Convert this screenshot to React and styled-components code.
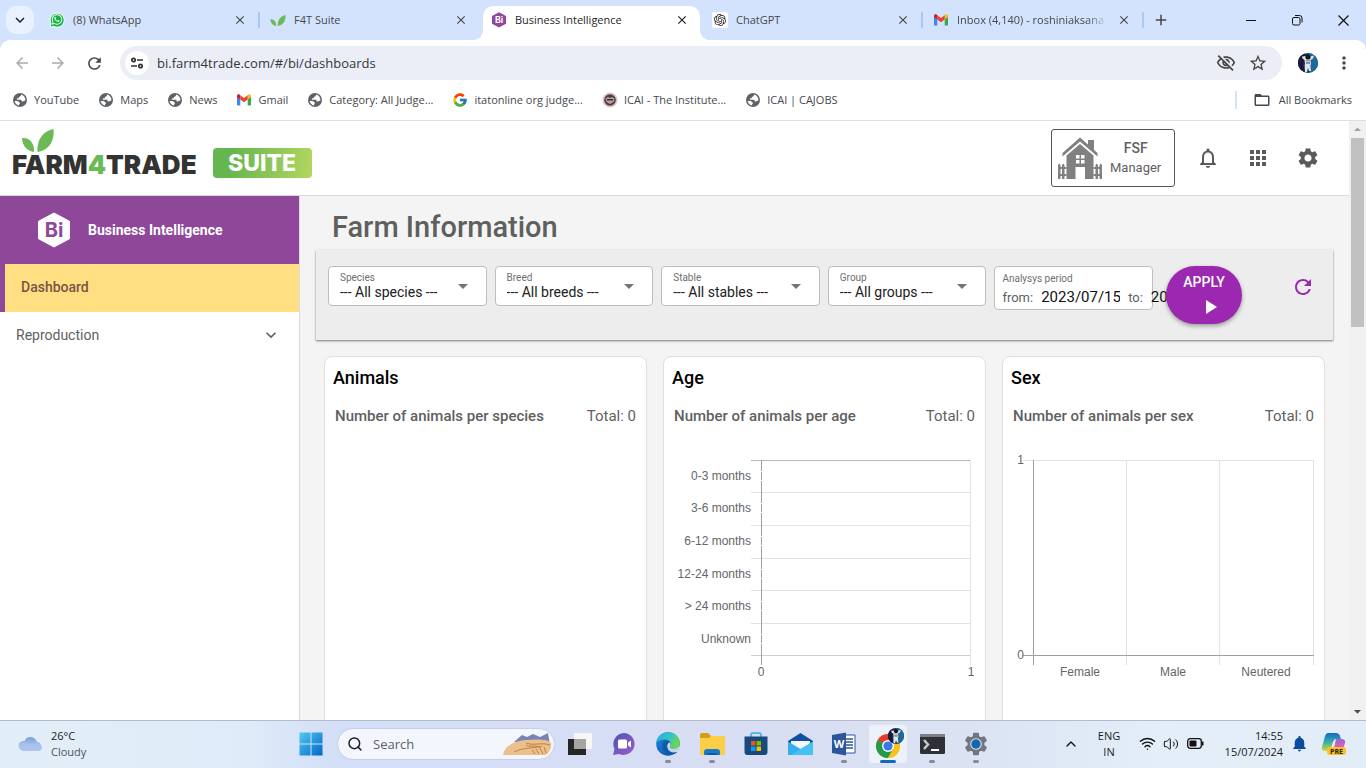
import React from "react";
import styled, { createGlobalStyle, css } from "styled-components";
import {
  MdNotificationsNone, MdApps, MdSettings, MdRefresh, MdPlayArrow, MdArrowDropDown,
  MdExpandMore, MdStarBorder, MdMoreVert, MdOutlineVisibilityOff, MdFolderOpen,
  MdArrowBack, MdArrowForward, MdClose, MdAdd, MdArrowDropUp, MdNotifications,
} from "react-icons/md";
import { SiOpenai } from "react-icons/si";
import { FaWhatsapp } from "react-icons/fa";
import { Wifi, Volume2, ChevronUp, Search } from "lucide-react";

const purple = "#8e4799";
const uiFont = '"Open Sans", "Noto Sans", sans-serif';
const appFont = 'Roboto, "Liberation Sans", sans-serif';

const GlobalStyle = createGlobalStyle`
  *, *::before, *::after { box-sizing: border-box; }
  body { margin: 0; background: #fff; }
  button, input, select { font: inherit; color: inherit; margin: 0; padding: 0; border: 0; background: none; }
  a { color: inherit; text-decoration: none; }
  h1, h2, h3, p { margin: 0; font-weight: inherit; font-size: inherit; }
  svg { display: block; flex: none; }
`;

const Screen = styled.div`
  display: flex;
  flex-direction: column;
  height: 100vh;
  overflow: hidden;
  font-family: ${uiFont};
`;

/* ---------- Browser window ---------- */
const TabStrip = styled.div`
  display: flex;
  align-items: center;
  height: 40px;
  flex: none;
  padding-left: 6px;
  background: #d3e3fd;
  font-size: 11px;
  color: #3c4043;
`;
const TabSearch = styled.button`
  display: grid;
  place-items: center;
  width: 28px;
  height: 28px;
  margin-right: 5px;
  border-radius: 10px;
  background: #e9f0fe;
  color: #1f1f1f;
`;
const Tab = styled.div`
  position: relative;
  display: flex;
  align-items: center;
  gap: 8px;
  flex: 0 1 221px;
  min-width: 0;
  height: 40px;
  padding: 0 12px 0 10px;
  color: ${(p) => (p.$active ? "#1f1f1f" : "#45494d")};
  z-index: ${(p) => (p.$active ? 1 : 0)};
  &::after {
    content: "";
    position: absolute;
    ${(p) =>
      p.$active
        ? css`
            z-index: -1;
            inset: 30px -8px 0 -8px;
            background:
              radial-gradient(circle at 0 0, transparent 10px, #fff 10px) left / 10px 10px no-repeat,
              radial-gradient(circle at 100% 0, transparent 10px, #fff 10px) right / 10px 10px no-repeat;
          `
        : css`
            right: 0;
            top: 12px;
            width: 2px;
            height: 16px;
            background: ${p.$divider ? "#a8c7fa" : "transparent"};
          `}
  }
  ${(p) =>
    p.$active &&
    css`
      &::before {
        content: "";
        position: absolute;
        z-index: -1;
        inset: 6px 2px 0 2px;
        border-radius: 10px 10px 0 0;
        background: #fff;
      }
    `}
`;
const TabTitle = styled.button`
  flex: 1;
  min-width: 0;
  overflow: hidden;
  white-space: nowrap;
  text-align: left;
  line-height: 20px;
  ${(p) => p.$fade && css`mask-image: linear-gradient(90deg, #000 86%, transparent);`}
`;
const IconButton = styled.button`
  display: grid;
  place-items: center;
  flex: none;
  width: ${(p) => p.$w || 36}px;
  height: ${(p) => p.$h || 32}px;
  color: ${(p) => p.$color || "#474747"};
`;
const WindowControls = styled.div`
  display: flex;
  margin-left: auto;
`;
const Toolbar = styled.div`
  display: flex;
  align-items: center;
  height: 46px;
  flex: none;
  padding: 0 4px;
  background: #fff;
  border-radius: 10px 10px 0 0;
`;
const ToolbarWrap = styled.div`
  flex: none;
  background: #d3e3fd;
`;
const Omnibox = styled.div`
  display: flex;
  align-items: center;
  flex: 1;
  height: 34px;
  margin: 0 8px;
  padding: 0 8px 0 5px;
  border-radius: 17px;
  background: #ebeef7;
`;
const SiteInfo = styled.button`
  display: grid;
  place-items: center;
  width: 24px;
  height: 24px;
  margin-right: 8px;
  border-radius: 50%;
  background: #fff;
`;
const Address = styled.input`
  flex: 1;
  min-width: 0;
  font-size: 13px;
  line-height: 20px;
  color: #33373b;
  outline: none;
`;
const Bookmarks = styled.nav`
  display: flex;
  align-items: center;
  gap: 19px;
  height: 35px;
  flex: none;
  padding: 0 14px 6px 12px;
  border-bottom: 1px solid #dcdfe3;
  font-size: 11px;
  line-height: 16px;
  color: #45494d;
`;
const Bookmark = styled.a`
  display: flex;
  align-items: center;
  gap: 6px;
  white-space: nowrap;
`;
const AllBookmarks = styled.button`
  display: flex;
  align-items: center;
  gap: 8px;
  margin-left: auto;
  padding-left: 16px;
  border-left: 2px solid #d3e3fd;
  white-space: nowrap;
`;

/* ---------- Web application ---------- */
const Viewport = styled.div`
  display: flex;
  flex: 1;
  min-height: 0;
  font-family: ${appFont};
  color: #5f5f5f;
`;
const Page = styled.div`
  display: flex;
  flex-direction: column;
  flex: 1;
  min-width: 0;
  overflow: hidden;
`;
const ScrollTrack = styled.div`
  display: flex;
  flex-direction: column;
  align-items: center;
  width: 17px;
  background: #f1f1f1;
`;
const ScrollThumb = styled.div`
  width: 13px;
  height: 189px;
  margin-bottom: auto;
  background: #c1c1c1;
`;
const Header = styled.header`
  display: flex;
  align-items: flex-start;
  flex: none;
  height: 75px;
  padding: 8px 16px 0 12px;
  border-bottom: 1px solid #dcdcdc;
  background: #fff;
`;
const Brand = styled.a`
  display: flex;
  align-items: flex-end;
  gap: 16px;
`;
const Wordmark = styled.span`
  display: block;
  font: 900 26px/26px Inter, sans-serif;
  color: #333432;
  em { font-style: normal; color: #6cba55; }
`;
const LeafMark = styled.svg`
  margin-left: 10px;
`;
const SuiteBadge = styled.span`
  width: 99px;
  border-radius: 4px;
  background: linear-gradient(100deg, #66b64f 20%, #b4d660);
  font: 800 23px/30px Inter, sans-serif;
  color: #fff;
  text-align: center;
`;
const HeaderActions = styled.div`
  display: flex;
  align-items: center;
  margin-left: auto;
`;
const FarmButton = styled.button`
  display: flex;
  align-items: center;
  gap: 8px;
  width: 124px;
  height: 58px;
  margin-right: 8px;
  padding: 0 6px;
  border: 1px solid #555;
  border-radius: 3px;
  font-size: 13px;
  line-height: 19px;
  color: #5f5f5f;
  strong { display: block; font-weight: 500; font-size: 14px; }
`;
const Body = styled.div`
  display: flex;
  flex: 1;
  min-height: 0;
`;
const Sidebar = styled.nav`
  width: 300px;
  flex: none;
  border-right: 1px solid #dcdcdc;
  background: #fff;
  font-size: 14px;
`;
const ModuleTitle = styled.div`
  display: flex;
  align-items: center;
  gap: 18px;
  height: 68px;
  padding-left: 38px;
  background: ${purple};
  color: #fff;
  font-weight: 700;
`;
const MenuItem = styled.a`
  display: flex;
  align-items: center;
  justify-content: space-between;
  height: 48px;
  padding: 0 18px 2px 16px;
  ${(p) =>
    p.$active &&
    css`
      border-left: 5px solid ${purple};
      background: #ffdf82;
      color: #795548;
      font-weight: 500;
    `}
`;
const Main = styled.main`
  flex: 1;
  min-width: 0;
  padding: 0 16px;
  background: #f4f4f4;
`;
const PageTitle = styled.h1`
  padding: 14px 16px 6px;
  font-weight: 500;
  font-size: 29px;
  line-height: 34px;
`;
const FilterPanel = styled.form`
  display: grid;
  grid-template-columns: repeat(5, minmax(0, 1fr)) 160px;
  align-items: start;
  gap: 8px;
  min-height: 90px;
  padding: 16px 12px;
  background: #ededed;
  box-shadow: 0 1px 2px rgba(0, 0, 0, 0.5);
`;
const Field = styled.div`
  position: relative;
  min-width: 0;
  height: 40px;
  padding: 4px 11px;
  border: 1px solid #bdbdbd;
  border-radius: 4px;
  background: #fff;
`;
const FieldLabel = styled.label`
  display: block;
  font-size: 10px;
  line-height: 13px;
  color: #6f6f6f;
`;
const Select = styled.select`
  display: block;
  width: 100%;
  appearance: none;
  outline: none;
  font-size: 14px;
  line-height: 16px;
  color: #212121;
`;
const FieldArrow = styled(MdArrowDropDown)`
  position: absolute;
  right: 11px;
  top: 7px;
  color: #757575;
  pointer-events: none;
`;
const PeriodField = styled(Field)`
  height: 44px;
  padding: 5px 7px;
`;
const PeriodRow = styled.div`
  display: flex;
  align-items: center;
  gap: 8px;
  height: 24px;
  font-size: 13px;
`;
const DateInput = styled.input`
  flex: none;
  width: 79px;
  font-size: 15px;
  line-height: 16px;
  color: #111;
`;
const FilterActions = styled.div`
  position: relative;
  display: flex;
  justify-content: space-between;
  align-items: flex-start;
  padding-left: 5px;
`;
const ApplyButton = styled.button`
  display: flex;
  flex-direction: column;
  align-items: center;
  width: 76px;
  height: 58px;
  padding-top: 5px;
  border-radius: 29px;
  background: #9c27b0;
  box-shadow: 0 2px 4px rgba(0, 0, 0, 0.35);
  color: #fff;
  font-weight: 500;
  font-size: 14px;
  line-height: 22px;
  svg { margin: 2px 0 0 12px; }
`;
const Cards = styled.div`
  display: grid;
  grid-template-columns: repeat(3, minmax(0, 1fr));
  gap: 16px;
  padding: 16px 8px;
`;
const Card = styled.section`
  min-height: 400px;
  padding: 8px;
  border: 1px solid #e0e0e0;
  border-radius: 8px;
  background: #fff;
`;
const CardTitle = styled.h2`
  font-weight: 500;
  font-size: 18px;
  line-height: 26px;
  color: #000;
`;
const CardSummary = styled.div`
  display: flex;
  justify-content: space-between;
  padding: 16px 2px 0;
  font-size: 15px;
  line-height: 18px;
  h3 { font-weight: 500; }
`;
const Chart = styled.svg`
  width: 100%;
  margin-top: 16px;
  font: 12px "Liberation Sans", sans-serif;
  fill: #666;
`;

/* ---------- Taskbar ---------- */
const Taskbar = styled.footer`
  display: flex;
  align-items: center;
  flex: none;
  height: 48px;
  padding-bottom: 2px;
  border-top: 1px solid #b4bccb;
  background: linear-gradient(90deg, #e2eef7 0%, #dfebf8 18%, #d3def8 25%, #d8def3 55%, #dbe3f3 70%, #e3eef8 85%, #e2edf8 100%);
  font-size: 11px;
  line-height: 16px;
  color: #1b1b1b;
`;
const Weather = styled.button`
  display: flex;
  align-items: center;
  gap: 8px;
  width: 289px;
  padding-left: 18px;
  text-align: left;
  span { display: block; color: #4d535c; }
`;
const TaskButton = styled.button`
  position: relative;
  display: grid;
  place-items: center;
  width: ${(p) => (p.$active ? 38 : 44)}px;
  height: 38px;
  margin: ${(p) => (p.$active ? "0 3px" : "0")};
  border-radius: 4px;
  background: ${(p) => (p.$active ? "#edf1fb" : "none")};
  &::after {
    content: "";
    position: absolute;
    bottom: 0;
    width: ${(p) => (p.$active ? 16 : 6)}px;
    height: 3px;
    border-radius: 2px;
    background: ${(p) => (p.$active ? "#0f6cbd" : p.$running ? "#858b98" : "transparent")};
  }
`;
const SearchBox = styled.label`
  display: flex;
  align-items: center;
  gap: 10px;
  width: 218px;
  height: 32px;
  margin: 0 3px 0 4px;
  padding: 0 2px 0 9px;
  border: 1px solid #c6d0e4;
  border-radius: 16px;
  background: #f3f7fd;
  font-size: 13px;
  input { flex: 1; min-width: 0; outline: none; }
  input::placeholder { color: #5a5f66; opacity: 1; }
`;
const Tray = styled.div`
  display: flex;
  align-items: center;
  margin-left: auto;
  padding-right: 13px;
`;
const TrayText = styled.button`
  width: ${(p) => p.$w}px;
  text-align: ${(p) => p.$align || "center"};
  span { display: block; }
`;

/* ---------- Drawings ---------- */
const Gmail = () => (
  <svg width="16" height="16" viewBox="0 0 16 16">
    <path d="M1 4v8.500c0 .6.4 1 1 1h2.300V7z" fill="#4285f4" />
    <path d="M15 4v8.500c0 .6-.4 1-1 1h-2.300V7z" fill="#34a853" />
    <path d="M11.700 3.500V7.500L15 5V4c0-1.600-1.700-2.200-2.800-1.300z" fill="#fbbc04" />
    <path d="M1 4v1l3.300 2.500v-4l-.5-.8C2.700 1.800 1 2.400 1 4z" fill="#c5221f" />
    <path d="M4.300 3.200 8 6l3.700-2.800v4.300L8 10.300 4.300 7.500z" fill="#ea4335" />
  </svg>
);
const Google = () => (
  <svg width="16" height="16" viewBox="0 0 48 48">
    <path fill="#ffc107" d="M43.600 20H24v8h11.300C33.700 32.700 29.200 36 24 36a12 12 0 1 1 8-21l5.600-5.600A20 20 0 1 0 43.600 20z" />
    <path fill="#ff3d00" d="m6.300 14.700 6.600 4.800A12 12 0 0 1 32 15l5.600-5.600A20 20 0 0 0 6.300 14.700z" />
    <path fill="#4caf50" d="M24 44c5.200 0 9.900-2 13.400-5.200l-6.200-5.200A12 12 0 0 1 12.700 28l-6.500 5A20 20 0 0 0 24 44z" />
    <path fill="#1976d2" d="M43.600 20H24v8h11.300a12 12 0 0 1-4.100 5.600l6.200 5.200C37 39.200 44 34 44 24c0-1.300-.1-2.700-.4-4z" />
  </svg>
);
const Globe = () => (
  <svg width="16" height="16" viewBox="0 0 16 16">
    <circle cx="8" cy="8" r="7" fill="#5f6368" />
    <path d="M9 2.500c.1 1.400-.5 1.900-1.500 2.200-.9.200-.9 1.100-.4 1.600H5.600c-1 0-1.100 1.400-.3 1.400h3.200c.9 0 1.300.7 1 1.500l1.200.2c.8.100 1.200-.7 2.700-.8A5.600 5.600 0 0 0 9 2.500z" fill="#fff" />
    <path d="M2.600 9h2.800c1.200 0 1.300 1.500 2.400 1.600v1.200c-.9.200-.8 1-.6 1.600A5.600 5.600 0 0 1 2.600 9z" fill="#fff" />
  </svg>
);
const Leaves = ({ as: As = "svg", w, h }) => (
  <As width={w} height={h} viewBox="0 0 32 23" aria-hidden="true">
    <path d="M0 9c7-.5 12.500 4 12 14C5.500 22 .5 17.500 0 9z" fill="#6cba55" />
    <path d="M31.500 0C21 2 14.500 11 15.500 23 25.500 22 33 13.500 31.500 0z" fill="#6cba55" />
  </As>
);
const BiHex = ({ size, bg, fg }) => (
  <svg width={size} height={(size * 9) / 8} viewBox="0 0 32 36">
    <path d="M16 0.500 31 8.500q1 .5 1 1.500v16q0 1-1 1.500L16 35.500 1 27.500q-1-.5-1-1.500V10q0-1 1-1.500z" fill={bg} />
    <text x="16" y="25" textAnchor="middle" fontFamily="Inter, sans-serif" fontWeight="700" fontSize="20" fill={fg}>Bi</text>
  </svg>
);
const WhatsApp = () => (
  <svg width="16" height="16" viewBox="0 0 16 16">
    <path d="M1 15.300 2 11.500A7 7 0 1 1 4.800 14.300z" fill="#12b53f" stroke="#fff" strokeWidth="1" />
    <FaWhatsapp x="2" y="1.500" size="12" color="#fff" />
  </svg>
);
const ChatGPT = () => (
  <svg width="16" height="16" viewBox="0 0 16 16">
    <rect width="16" height="16" rx="2" fill="#fff" />
    <SiOpenai x="2" y="2" size="12" color="#222" />
  </svg>
);
const Emblem = () => (
  <svg width="16" height="16" viewBox="0 0 16 16">
    <circle cx="8" cy="8" r="7.500" fill="#e3c3bd" />
    <circle cx="8" cy="8" r="5.800" fill="#463b62" />
    <path d="M3.500 6.500 6 5l2 1 2-1 2.500 1.500-1 3.500L8 12l-3.500-2z" fill="#c0a579" />
    <path d="M5 7h6v1.500H5z" fill="#2c2d50" />
  </svg>
);
const SiteSettings = () => (
  <svg width="14" height="14" viewBox="0 0 14 14" fill="none" stroke="#303134" strokeWidth="1.700">
    <circle cx="3.500" cy="4" r="1.700" /><path d="M7 4h6M1 10h6" /><circle cx="10.500" cy="10" r="1.700" />
  </svg>
);
const Avatar = ({ size = 20 }) => (
  <svg width={size} height={size} viewBox="0 0 20 20">
    <circle cx="10" cy="10" r="10" fill="#173557" />
    <path d="M10 0a10 10 0 0 1 0 20c5-4 2-8 3-12z" fill="#1d6c98" />
    <path d="M0 10A10 10 0 0 1 7 .5L5 12l2 7a10 10 0 0 1-7-9z" fill="#1c1838" />
    <path d="M4 3.500 8 3l4 .5 4-1-1 3-2.500 1.500.5 3.500-.5 2.500.5 5h-2L10 15l-1 4H7l-.3-6 .3-3-.5-3L4.500 5.500z" fill="#dfe3ec" />
    <circle cx="10" cy="4" r="2.600" fill="#111522" />
    <path d="M8 8.500h4v2.500H8z" fill="#7f90b4" />
    <path d="M7.500 6.800h4.500v1H7.500z" fill="#b98a80" />
  </svg>
);
const RestoreGlyph = () => (
  <svg width="12" height="12" viewBox="0 0 12 12" fill="none" stroke="#111">
    <rect x="1.500" y="3.500" width="7.500" height="7.500" rx="1.500" /><path d="M4 1.500h4.500a2.500 2.500 0 0 1 2.500 2.500v4.500" />
  </svg>
);
const House = () => (
  <svg width="44" height="42" viewBox="0 0 44 42">
    <g fill="#808080">
      <path d="M30 3h6v11l-6-5.500z" />
      <path d="M22 .5 39.500 16v3.500L22 4.500 4.500 19.500V16z" />
      <path d="M22 7 35.500 18.500V42H27V30h-9.500v12H8.500V18.500z" />
      <path d="M0 28l1.200-1.500L2.500 28v14H0zM4 28l1.200-1.500L6.500 28v14H4zM37.500 28l1.200-1.500L40 28v14h-2.500zM41.500 28l1.200-1.500L44 28v14h-2.500zM0 30h8.500v2H0zM0 37h8.500v2H0zM35.500 30H44v2h-8.500zM35.500 37H44v2h-8.500z" />
    </g>
    <path d="M18 18h3.500v3.500H18zM23 18h3.500v3.500H23zM18 23h3.500v3.500H18zM23 23h3.500v3.500H23z" fill="#fff" />
  </svg>
);
const Cloud = () => (
  <svg width="25" height="17" viewBox="0 0 25 17">
    <defs><linearGradient id="cl" x2="0" y2="1"><stop stopColor="#7d9fdc" /><stop offset="1" stopColor="#c5d6f6" /></linearGradient></defs>
    <path d="M5.500 16a5 5 0 0 1 0-10h1a6.500 6.500 0 0 1 12.300 1A4.600 4.600 0 0 1 20 16z" fill="url(#cl)" />
    <path d="M5 16a4.500 4.500 0 0 1 0-8.500c4-.5 6 1.500 7 4 3-4 9-5 12 0 .5 3-1.500 4.500-4 4.500z" fill="#a9c0ef" opacity=".8" />
  </svg>
);
const Windows = () => (
  <svg width="24" height="24" viewBox="0 0 24 24">
    <defs><linearGradient id="wn" x2="1" y2="1" gradientUnits="objectBoundingBox"><stop stopColor="#4fc9f5" /><stop offset="1" stopColor="#0067c6" /></linearGradient></defs>
    <path d="M.5.500H11.500V11.500H.500zM12.500.500H23.500V11.500H12.500zM.500 12.500H11.500V23.500H.500zM12.500 12.500H23.500V23.500H12.500z" fill="url(#wn)" />
  </svg>
);
const Dunes = () => (
  <svg width="50" height="24" viewBox="0 0 50 24">
    <path d="M12 10 20 3l5 2 6-3 7 3 8-4 2 12z" fill="#7b83b4" />
    <path d="M1 23C2 14 12 9 24 8s22-1 25 3c1 5-2 10-5 12z" fill="#ecc08c" />
    <path d="M12 20c10-5 18-3 28-6M24 13c4 3 10-1 14 3M30 18l3 4M34 17l3 5M38 16l3 6M42 15l2 6M24 11c8 3 16-1 24 2" fill="none" stroke="#b97a3d" strokeWidth=".9" />
  </svg>
);
const TaskView = () => (
  <svg width="26" height="24" viewBox="0 0 26 24">
    <path d="M1 7h18v16H1z" fill="#262626" /><path d="M7 1h18v16H7z" fill="#f6f6f4" /><path d="M7 7h12v10H7z" fill="#a5a5a5" />
  </svg>
);
const Chat = () => (
  <svg width="24" height="24" viewBox="0 0 24 24">
    <defs><linearGradient id="ch" x2="1" y2="1"><stop stopColor="#4f52b2" /><stop offset="1" stopColor="#9a5fc9" /></linearGradient></defs>
    <path d="M12 1a11 11 0 1 1-5 21L1 23l1.500-6A11 11 0 0 1 12 1z" fill="url(#ch)" />
    <rect x="6" y="7.500" width="9" height="9" rx="1.500" fill="#fff" /><path d="m16 10.500 3-2v7l-3-2z" fill="#fff" />
  </svg>
);
const Edge = () => (
  <svg width="24" height="24" viewBox="0 0 24 24">
    <defs>
      <linearGradient id="e1" x2="1" y2=".5"><stop stopColor="#2aa8e8" /><stop offset=".6" stopColor="#36c5c0" /><stop offset="1" stopColor="#6cd94d" /></linearGradient>
      <linearGradient id="e2" x2="1" y2="1"><stop stopColor="#1b8be0" /><stop offset="1" stopColor="#0c4a98" /></linearGradient>
    </defs>
    <circle cx="12" cy="12" r="11.800" fill="url(#e2)" />
    <path d="M.3 11C1 4.500 6 .2 12 .2c7 0 11.800 5 11.800 10.300 0 4-3 6.300-6.300 6.300-2.800 0-4.300-1-3.600-2.200 2.200-3.500-.4-7.100-4.900-7.100C5 7.500 1.500 9 .3 11z" fill="url(#e1)" />
    <path d="M9 8.500c-3 2-3.500 8 0 11.500 3 3 8 3.500 12.300.3 0-1.300-.6-1-2.300-.4-4 1-7.500-1-8-4.900-.3-2.500 1-4 2.500-4.500-1-1.500-2.500-2-4.500-2z" fill="#0d5aa8" />
    <path d="M13.900 14.600c-.7 1.200.8 2.200 3.600 2.200 3 0 5.500-1.800 6.200-4.600l-.2 3-2 5c-1 .2-2.500 0-4 .2-4-.5-6-3-6.300-6.500.3-2 1.500-3.500 2.500-3.500 1 1.500 1 3 .2 4.200z" fill="#e4ebf5" opacity=".85" />
  </svg>
);
const Folder = () => (
  <svg width="25" height="22" viewBox="0 0 25 22">
    <path d="M0 2q0-2 2-2h6l3 3h12q2 0 2 2v3H0z" fill="#d89b17" /><path d="M0 5h9l2-2h12q2 0 2 2v17H0z" fill="#fbce46" />
    <path d="M4 22v-3q0-3 3-3h10q3 0 3 3v3z" fill="#1a78cb" /><path d="M7 20h10v2H7z" fill="#135a9e" />
  </svg>
);
const Store = () => (
  <svg width="24" height="24" viewBox="0 0 24 24">
    <path d="M7 5V3q0-2 2-2h6q2 0 2 2v2" fill="none" stroke="#54b8ea" strokeWidth="2" />
    <path d="M.5 4.500h23V20q0 3-3 3h-17q-3 0-3-3z" fill="#194a7d" />
    <path d="M7 9h4.500v4.500H7z" fill="#f25022" /><path d="M12.500 9H17v4.500h-4.500z" fill="#7fba00" /><path d="M7 14.500h4.500V19H7z" fill="#00a4ef" /><path d="M12.500 14.500H17V19h-4.500z" fill="#ffb900" />
  </svg>
);
const Mail = () => (
  <svg width="25" height="22" viewBox="0 0 25 22">
    <path d="M0 8 12.500 0 25 8v4H0z" fill="#10509f" /><path d="M3 8h19v8H3z" fill="#f4f8fc" />
    <path d="M0 8.500 12.500 16 25 8.500V22H0z" fill="#33b1ee" /><path d="M25 8.500V22H3z" fill="#4fc8f5" opacity=".7" />
  </svg>
);
const Word = () => (
  <svg width="24" height="24" viewBox="0 0 24 24">
    <path d="M12 3h11v18H12z" fill="#fff" stroke="#2b579a" /><path d="M14 7h7M14 10h7M14 13h7M14 16h7" stroke="#2b579a" strokeWidth="1.300" />
    <path d="M0 3 14 .5v23L0 21z" fill="#2b579a" />
    <text x="7" y="16" textAnchor="middle" fontFamily="Open Sans, sans-serif" fontWeight="700" fontSize="11" fill="#fff">W</text>
  </svg>
);
const Chrome = () => (
  <svg width="32" height="32" viewBox="0 0 32 32">
    <g transform="translate(4 6)">
      <circle cx="12" cy="12" r="12" fill="#fbc116" />
      <path d="M12 12 1.600 6A12 12 0 0 1 22.400 6z" fill="#e33b2e" />
      <path d="M1.600 6A12 12 0 0 0 12 24l5.200-9L12 12z" fill="#239a4a" />
      <path d="M12 6h10.400A12 12 0 0 1 12 24l5.200-9z" fill="#fbc116" />
      <circle cx="12" cy="12" r="6" fill="#fff" /><circle cx="12" cy="12" r="4.600" fill="#3b78e7" />
    </g>
    <svg x="16" y="0" width="17" height="17"><Avatar size={16} /></svg>
  </svg>
);
const Terminal = () => (
  <svg width="25" height="20" viewBox="0 0 25 20">
    <rect width="25" height="20" rx="1.500" fill="#2f3234" /><path d="M0 0h25v3H0z" fill="#7d7f82" />
    <path d="m4 6 4 4.500L4 15" fill="none" stroke="#c9c9c9" strokeWidth="2.500" /><path d="M11 16h8" stroke="#fff" strokeWidth="2" />
  </svg>
);
const Gear = () => (
  <svg width="28" height="28" viewBox="0 0 24 24">
    <MdSettings size="24" color="#6f777f" /><circle cx="12" cy="12" r="5" fill="#d9e2ee" /><circle cx="12" cy="12" r="4" fill="#1565b0" />
  </svg>
);
const Battery = () => (
  <svg width="17" height="11" viewBox="0 0 17 11">
    <rect x=".7" y=".7" width="13.600" height="9.600" rx="2.500" fill="none" stroke="#111" strokeWidth="1.300" /><rect x="2.500" y="2.500" width="7" height="6" rx="1" fill="#111" /><path d="M15 3.500h1.500v4H15z" fill="#111" />
  </svg>
);
const Copilot = () => (
  <svg width="26" height="24" viewBox="0 0 26 24">
    <defs>
      <linearGradient id="c1" x2="0" y2="1"><stop stopColor="#1668c9" /><stop offset=".5" stopColor="#34b0a8" /><stop offset="1" stopColor="#d8d83a" /></linearGradient>
      <linearGradient id="c2" x2="0" y2="1"><stop stopColor="#a060e0" /><stop offset="1" stopColor="#f0679a" /></linearGradient>
    </defs>
    <path d="M7 1h8q3 0 4 3l1 3h-5q-2 0-3 3l-2 6q-1 3-4 3H4q-4 0-3-4L4 4q1-3 3-3z" fill="url(#c1)" />
    <path d="M15 7h5q5 0 4 4l-2 6q-1 2-4 2h-8q2 0 3-3z" fill="url(#c2)" />
    <rect x="6" y="15" width="19" height="8" rx="3" fill="#ffc21a" />
    <text x="15.500" y="22" textAnchor="middle" fontFamily="Open Sans, sans-serif" fontWeight="700" fontSize="7" fill="#222">PRE</text>
  </svg>
);

/* ---------- Data ---------- */
const tabs = [
  { title: "(8) WhatsApp", icon: <WhatsApp />, divider: true },
  { title: "F4T Suite", icon: <Leaves w={16} h={11} /> },
  { title: "Business Intelligence", icon: <BiHex size={14} bg={purple} fg="#fff" />, active: true },
  { title: "ChatGPT", icon: <ChatGPT />, divider: true },
  { title: "Inbox (4,140) - roshiniaksana", icon: <Gmail />, divider: true, fade: true },
];
const bookmarks = [
  ["YouTube", Globe], ["Maps", Globe], ["News", Globe], ["Gmail", Gmail],
  ["Category: All Judge...", Globe], ["itatonline org judge...", Google],
  ["ICAI - The Institute...", Emblem], ["ICAI | CAJOBS", Globe],
];
const filters = [
  ["Species", "--- All species ---"], ["Breed", "--- All breeds ---"],
  ["Stable", "--- All stables ---"], ["Group", "--- All groups ---"],
];
const ages = ["0-3 months", "3-6 months", "6-12 months", "12-24 months", "> 24 months", "Unknown"];
const sexes = ["Female", "Male", "Neutered"];
const apps = [
  ["Task View", TaskView], ["Chat", Chat], ["Edge", Edge, "running"], ["File Explorer", Folder, "running"],
  ["Store", Store], ["Mail", Mail], ["Word", Word, "running"], ["Chrome", Chrome, "active"],
  ["Terminal", Terminal, "running"], ["Settings", Gear, "running"],
];
const rowLines = [19, 51, 84, 117, 149, 182, 214];

const AgeChart = () => (
  <Chart viewBox="0 0 305 250" role="img" aria-label="Number of animals per age">
    {rowLines.map((y, i) => (
      <rect key={y} x="79" y={y} width="220" height="1" fill={i === 0 ? "#b5b5b5" : i === 6 ? "#cfcfcf" : "#e2e2e2"} />
    ))}
    <rect x="298" y="19" width="1" height="205" fill="#e2e2e2" />
    <rect x="89" y="19" width="1" height="205" fill="#a0a0a0" />
    {ages.map((label, i) => (
      <g key={label}>
        <path d={`M89 ${rowLines[i] + 11}h1v1h-1zM89 ${rowLines[i] + 20}h1v1h-1z`} fill="#fff" />
        <text x="79" y={rowLines[i] + 20} textAnchor="end">{label}</text>
      </g>
    ))}
    <text x="89" y="235" textAnchor="middle">0</text>
    <text x="299" y="235" textAnchor="middle">1</text>
  </Chart>
);
const SexChart = () => (
  <Chart viewBox="0 0 305 250" role="img" aria-label="Number of animals per sex">
    <rect x="12" y="19" width="291" height="1" fill="#e2e2e2" />
    {[115, 208, 302].map((x) => <rect key={x} x={x} y="19" width="1" height="205" fill="#e2e2e2" />)}
    <rect x="22" y="19" width="1" height="205" fill="#a0a0a0" />
    <rect x="12" y="214" width="291" height="1" fill="#a0a0a0" />
    <text x="13" y="23" textAnchor="end">1</text>
    <text x="13" y="218" textAnchor="end">0</text>
    {sexes.map((label, i) => <text key={label} x={69 + i * 93} y="235" textAnchor="middle">{label}</text>)}
  </Chart>
);
const cards = [
  ["Animals", "Number of animals per species", null],
  ["Age", "Number of animals per age", AgeChart],
  ["Sex", "Number of animals per sex", SexChart],
];

export default function App() {
  return (
    <Screen>
      <GlobalStyle />
      <TabStrip>
        <TabSearch aria-label="Search tabs"><MdExpandMore size={18} /></TabSearch>
        {tabs.map((t) => (
          <Tab key={t.title} $active={t.active} $divider={t.divider}>
            <IconButton as="span" $w={16} $h={16}>{t.icon}</IconButton>
            <TabTitle $fade={t.fade}>{t.title}</TabTitle>
            <IconButton $w={16} $h={16} $color={t.active ? "#1f1f1f" : undefined} aria-label="Close tab"><MdClose size={14} /></IconButton>
          </Tab>
        ))}
        <IconButton $w={34} aria-label="New tab"><MdAdd size={18} /></IconButton>
        <WindowControls>
          <IconButton $w={46} aria-label="Minimize"><svg width="10" height="10"><path d="M0 5.500h10" stroke="#111" /></svg></IconButton>
          <IconButton $w={46} aria-label="Restore"><RestoreGlyph /></IconButton>
          <IconButton $w={46} aria-label="Close window"><svg width="11" height="11"><path d="m.5.500 10 10m0-10-10 10" stroke="#111" strokeWidth="1.200" /></svg></IconButton>
        </WindowControls>
      </TabStrip>
      <ToolbarWrap>
        <Toolbar>
          <IconButton $color="#a9abae" aria-label="Back"><MdArrowBack size={18} /></IconButton>
          <IconButton $color="#a9abae" aria-label="Forward"><MdArrowForward size={18} /></IconButton>
          <IconButton aria-label="Reload"><MdRefresh size={19} /></IconButton>
          <Omnibox>
            <SiteInfo aria-label="Site information"><SiteSettings /></SiteInfo>
            <Address aria-label="Address" defaultValue="bi.farm4trade.com/#/bi/dashboards" />
            <IconButton $w={32} aria-label="Third-party cookies blocked"><MdOutlineVisibilityOff size={20} /></IconButton>
            <IconButton $w={32} aria-label="Bookmark this tab"><MdStarBorder size={20} /></IconButton>
          </Omnibox>
          <IconButton aria-label="Profile"><Avatar /></IconButton>
          <IconButton aria-label="Menu"><MdMoreVert size={20} /></IconButton>
        </Toolbar>
      </ToolbarWrap>
      <Bookmarks>
        {bookmarks.map(([label, Icon]) => (
          <Bookmark href="#" key={label}><Icon />{label}</Bookmark>
        ))}
        <AllBookmarks><MdFolderOpen size={18} />All Bookmarks</AllBookmarks>
      </Bookmarks>

      <Viewport>
        <Page>
          <Header>
            <Brand href="#">
              <span>
                <Leaves as={LeafMark} w={32} h={23} />
                <Wordmark>FARM<em>4</em>TRADE</Wordmark>
              </span>
              <SuiteBadge>SUITE</SuiteBadge>
            </Brand>
            <HeaderActions>
              <FarmButton><House /><span><strong>FSF</strong>Manager</span></FarmButton>
              <IconButton $w={50} $color="#5a5a5a" aria-label="Notifications"><MdNotificationsNone size={24} /></IconButton>
              <IconButton $w={50} $color="#5a5a5a" aria-label="Applications"><MdApps size={24} /></IconButton>
              <IconButton $w={50} $color="#5a5a5a" aria-label="Settings"><MdSettings size={24} /></IconButton>
            </HeaderActions>
          </Header>
          <Body>
            <Sidebar>
              <ModuleTitle><BiHex size={32} bg="#fff" fg={purple} />Business Intelligence</ModuleTitle>
              <MenuItem href="#" $active>Dashboard</MenuItem>
              <MenuItem href="#">Reproduction<MdExpandMore size={20} /></MenuItem>
            </Sidebar>
            <Main>
              <PageTitle>Farm Information</PageTitle>
              <FilterPanel onSubmit={(e) => e.preventDefault()}>
                {filters.map(([label, value]) => (
                  <Field key={label}>
                    <FieldLabel htmlFor={label}>{label}</FieldLabel>
                    <Select id={label}><option>{value}</option></Select>
                    <FieldArrow size={24} />
                  </Field>
                ))}
                <PeriodField>
                  <FieldLabel as="div">Analysys period</FieldLabel>
                  <PeriodRow>
                    <label htmlFor="from">from:</label>
                    <DateInput id="from" defaultValue="2023/07/15" />
                    <label htmlFor="to">to:</label>
                    <DateInput id="to" defaultValue="2024/07/15" />
                  </PeriodRow>
                </PeriodField>
                <FilterActions>
                  <ApplyButton>APPLY<MdPlayArrow size={24} /></ApplyButton>
                  <IconButton type="button" $h={42} $color="#9c27b0" aria-label="Reset filters"><MdRefresh size={24} /></IconButton>
                </FilterActions>
              </FilterPanel>
              <Cards>
                {cards.map(([title, subtitle, Plot]) => (
                  <Card key={title}>
                    <CardTitle>{title}</CardTitle>
                    <CardSummary><h3>{subtitle}</h3><span>Total: 0</span></CardSummary>
                    {Plot && <Plot />}
                  </Card>
                ))}
              </Cards>
            </Main>
          </Body>
        </Page>
        <ScrollTrack>
          <IconButton $w={17} $h={17} $color="#a3a3a3" aria-label="Scroll up"><MdArrowDropUp size={17} /></IconButton>
          <ScrollThumb />
          <IconButton $w={17} $h={17} $color="#505050" aria-label="Scroll down"><MdArrowDropDown size={17} /></IconButton>
        </ScrollTrack>
      </Viewport>

      <Taskbar>
        <Weather><Cloud /><div>26°C<span>Cloudy</span></div></Weather>
        <TaskButton aria-label="Start"><Windows /></TaskButton>
        <SearchBox><Search size={16} strokeWidth={2.2} /><input placeholder="Search" aria-label="Search" /><Dunes /></SearchBox>
        {apps.map(([label, Icon, state]) => (
          <TaskButton key={label} aria-label={label} $active={state === "active"} $running={state === "running"}><Icon /></TaskButton>
        ))}
        <Tray>
          <IconButton $w={32} $color="#111" aria-label="Hidden icons"><ChevronUp size={16} /></IconButton>
          <TrayText $w={44}>ENG<span>IN</span></TrayText>
          <IconButton $w={32} $color="#111" aria-label="Network"><Wifi size={17} /></IconButton>
          <IconButton $w={16} $color="#111" aria-label="Volume"><Volume2 size={16} strokeWidth={1.5} /></IconButton>
          <IconButton $w={32} $color="#111" aria-label="Battery"><Battery /></IconButton>
          <TrayText $w={72} $align="right">14:55<span>15/07/2024</span></TrayText>
          <IconButton $w={32} $color="#0b4a9c" aria-label="Notifications"><MdNotifications size={19} /></IconButton>
          <IconButton $w={38} aria-label="Copilot"><Copilot /></IconButton>
        </Tray>
      </Taskbar>
    </Screen>
  );
}
